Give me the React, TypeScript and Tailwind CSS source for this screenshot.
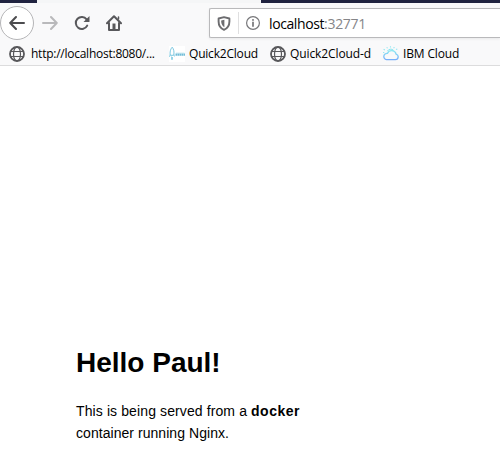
import type { ReactNode } from "react";

function Globe() {
  return (
    <svg width="16" height="16" viewBox="0 0 16 16" fill="none" stroke="#58585b">
      <circle cx="8" cy="8" r="7" strokeWidth="1.8" />
      <ellipse cx="8" cy="8" rx="3.5" ry="7" strokeWidth="1.2" />
      <path d="M1.5 5.5h13M1.5 10.5h13" strokeWidth="1.2" />
    </svg>
  );
}

function Arrow({ className, d }: { className: string; d: string }) {
  return (
    <svg className={className} width="16" height="16" viewBox="0 0 16 16" fill="none" stroke="currentColor" strokeWidth="2" strokeLinecap="round" strokeLinejoin="round">
      <path d={d} />
    </svg>
  );
}

function Reload() {
  return (
    <svg width="16" height="16" viewBox="0 0 16 16" fill="none">
      <path d="M12.6 4.3A6 6 0 1 0 13.2 10.6" stroke="#58585b" strokeWidth="2" strokeLinecap="round" />
      <path d="M15.5 1v5.4a.6.6 0 0 1-.6.6H9.5z" fill="#58585b" />
    </svg>
  );
}

function Home() {
  return (
    <svg width="16" height="16" viewBox="0 0 16 16" fill="none" stroke="#58585b" strokeWidth="2" strokeLinejoin="round" strokeLinecap="round">
      <path d="M1 8.2L8 1.2L15 8.2" />
      <path d="M3 8V15H13V8" />
      <path d="M6.5 8.5H9.5V14H6.5Z" fill="#58585b" stroke="none" />
      <path d="M12.5 2V4" strokeWidth="1.5" />
    </svg>
  );
}

function Shield() {
  return (
    <svg width="14" height="15" viewBox="0 0 14 15" fill="none">
      <path d="M7 1.2L12.4 2.5V5.5C12.4 9.7 10.4 12.4 7 13.8C3.6 12.4 1.6 9.7 1.6 5.5V2.5Z" stroke="#6c6c6f" strokeWidth="1.9" strokeLinejoin="round" />
      <path d="M7.4 3.7V11.2C5.4 10 4.2 8 4.2 5.5V4.4Z" fill="#6c6c6f" />
    </svg>
  );
}

function Info() {
  return (
    <svg width="14" height="14" viewBox="0 0 14 14" fill="none">
      <circle cx="7" cy="7" r="6.4" stroke="#77777a" strokeWidth="1.2" />
      <path d="M7 5.8V10.8" stroke="#6c6c6f" strokeWidth="1.6" />
      <circle cx="7" cy="3.9" r=".95" fill="#6c6c6f" />
    </svg>
  );
}

function DropletMark() {
  return (
    <svg width="16" height="16" viewBox="0 0 16 16" fill="none">
      <rect width="16" height="16" fill="#fff" />
      <path d="M3.2 1.2C1.4 3 .6 6.4 1.3 9.3H4.7C5.4 6.2 4.8 3 3.2 1.2Z" stroke="#7cc8e1" />
      <path d="M1.1 8.5L.5 11M5 8.5L5.5 10.5M2.5 10.5V13.5H3.5V11" stroke="#8acfe4" strokeWidth=".9" />
      <path d="M6.5 8.7H16" stroke="#72bdd8" strokeWidth="2.2" strokeDasharray="1.7 .35" />
      <path d="M7 7.2H15.5" stroke="#a8d9e9" strokeWidth=".8" />
    </svg>
  );
}

function CloudMark() {
  return (
    <svg width="16" height="16" viewBox="0 0 16 16" fill="none">
      <defs>
        <linearGradient id="cloud" x1="0" y1="0" x2="0" y2="1">
          <stop stopColor="#8de8f2" />
          <stop offset="1" stopColor="#76adfa" />
        </linearGradient>
      </defs>
      <path d="M3.5 13.6H12.5A2.8 2.8 0 0 0 13.1 8.1A4.6 4.6 0 0 0 4.4 7.4A3.1 3.1 0 0 0 3.5 13.6Z" stroke="url(#cloud)" strokeWidth="1.3" />
      <path d="M4.4 5.1A3.9 3.9 0 0 1 10.4 4.2" stroke="#86e5f1" />
      <path d="M7.5 .2V1.5M3.7 1.2L4.5 2.3M11.4 1.1L10.6 2.2M.6 3.3L1.9 4M13 3.5L14.3 2.9M0 6.5H1.3" stroke="#95e8f2" strokeWidth="1.1" />
    </svg>
  );
}

function Bookmark({ icon, label, className, textClass }: { icon: ReactNode; label: string; className: string; textClass: string }) {
  return (
    <div className={`flex shrink-0 items-center ${className}`}>
      {icon}
      <span className={`whitespace-nowrap text-[12px] leading-4 ${textClass}`}>{label}</span>
    </div>
  );
}

export default function App() {
  return (
    <div className="h-[462px] w-[500px] overflow-hidden bg-white text-black">
      <header className="h-[66px] border-b border-[#dcdcdd] bg-[#f9f9fa] font-['Open_Sans','Noto_Sans',sans-serif]">
        <div className="flex h-[3px]">
          <div className="w-[37px] bg-[#202340]" />
          <div className="w-[224px] bg-[#f5f6f7]" />
          <div className="flex-1 bg-[#202340]" />
        </div>
        <nav className="flex h-10 items-center">
          <button className="flex size-[34px] items-center justify-center rounded-full border border-[#b5b5b7] bg-white">
            <Arrow className="text-[#4c4c4f]" d="M1.2 8H15M7 2L1.2 8L7 14" />
          </button>
          <Arrow className="ml-2 text-[#b9b9bb]" d="M1 8H14.8M9 2L14.8 8L9 14" />
          <span className="ml-4"><Reload /></span>
          <span className="ml-4"><Home /></span>
          <div className="ml-[87px] flex h-[30px] flex-1 items-center rounded-l-[2px] border border-r-0 border-[#b9b9bb] bg-white shadow-[0_1px_3px_rgba(0,0,0,0.07)]">
            <span className="ml-[7px]"><Shield /></span>
            <span className="ml-[7px] h-[22px] w-px bg-[#dfdfe0]" />
            <span className="ml-[7px]"><Info /></span>
            <span className="ml-[9px] pt-px text-[14px] leading-5 tracking-[-0.4px]">localhost<span className="tracking-[-0.3px] text-[#858588]">:32771</span></span>
          </div>
        </nav>
        <div className="flex h-[21px] items-center pl-[9px]">
          <Bookmark icon={<Globe />} label="http://localhost:8080/..." className="w-[160px] gap-1.5" textClass="tracking-[-0.25px]" />
          <Bookmark icon={<DropletMark />} label="Quick2Cloud" className="w-[101px] gap-1" textClass="tracking-[-0.2px]" />
          <Bookmark icon={<Globe />} label="Quick2Cloud-d" className="w-[113px] gap-1" textClass="tracking-[-0.1px]" />
          <Bookmark icon={<CloudMark />} label="IBM Cloud" className="gap-1" textClass="tracking-[-0.15px]" />
        </div>
      </header>
      <main className="px-[76px] pt-[277px] font-['Liberation_Sans',Arial,sans-serif]">
        <h1 className="text-[28px] leading-10 font-bold">Hello Paul!</h1>
        <p className="mt-[17px] text-[14px] leading-[22px]">
          <span className="tracking-[0.11px]">This is being served from a </span>
          <strong className="tracking-[0.5px]">docker</strong>
          <br />
          <span className="tracking-[0.05px]">container running Nginx.</span>
        </p>
      </main>
    </div>
  );
}
